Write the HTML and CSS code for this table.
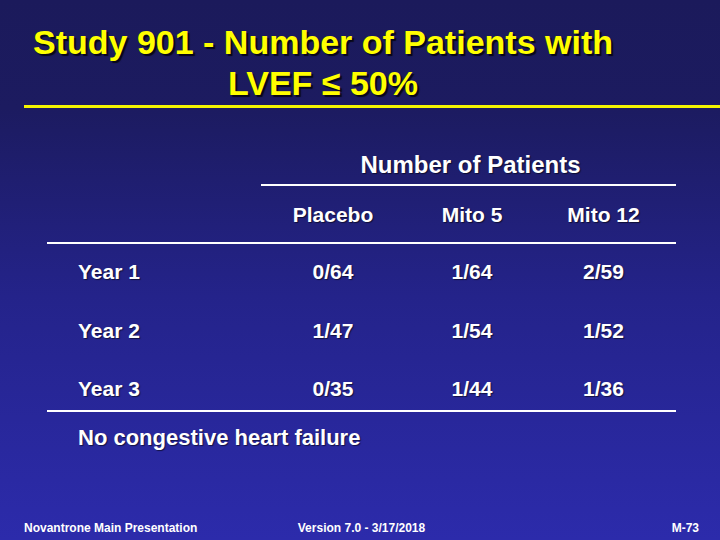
FILE: index.html
```html
<!DOCTYPE html>
<html>
<head>
<meta charset="utf-8">
<link rel="stylesheet" href="styles.css">
</head>
<body>
<div class="slide">
  <div class="title">
    <div class="title-line">Study 901 - Number of Patients with</div>
    <div class="title-line">LVEF ≤ 50%</div>
  </div>
  <div class="title-rule"></div>

  <div class="table">
    <div class="group-head">Number of Patients</div>

    <div class="colhead"></div>
    <div class="colhead num">Placebo</div>
    <div class="colhead num">Mito 5</div>
    <div class="colhead num c4">Mito 12</div>

    <div class="cell label">Year 1</div>
    <div class="cell num">0/64</div>
    <div class="cell num">1/64</div>
    <div class="cell num c4">2/59</div>

    <div class="cell label">Year 2</div>
    <div class="cell num">1/47</div>
    <div class="cell num">1/54</div>
    <div class="cell num c4">1/52</div>

    <div class="cell label last">Year 3</div>
    <div class="cell num last">0/35</div>
    <div class="cell num last">1/44</div>
    <div class="cell num last c4">1/36</div>
  </div>

  <div class="note">No congestive heart failure</div>

  <div class="footer">
    <div class="foot-left">Novantrone Main Presentation</div>
    <div class="foot-mid">Version 7.0 - 3/17/2018</div>
    <div class="foot-right">M-73</div>
  </div>
</div>
</body>
</html>
```

FILE: styles.css
```css
html, body {
  margin: 0;
  padding: 0;
}

body {
  width: 720px;
  height: 540px;
  overflow: hidden;
  font-family: "Liberation Sans", Arial, sans-serif;
}

.slide {
  width: 720px;
  height: 540px;
  display: flex;
  flex-direction: column;
  background: linear-gradient(to bottom, #1b1a5b 0%, #1c1b60 20%, #24238a 55%, #2c2bab 100%);
  color: #ffffff;
}

.title {
  width: 646px;
  padding-top: 22px;
  text-align: center;
  font-size: 34px;
  line-height: 41px;
  font-weight: bold;
  color: #ffff00;
  text-shadow: 2px 2px 1px rgba(0, 0, 0, 0.75);
}

.title-rule {
  margin: 1px 0 0 24px;
  height: 3px;
  background: #f4f400;
}

.table {
  margin: 43px 0 0 47px;
  width: 629px;
  display: grid;
  grid-template-columns: 214px 144px 134px 137px;
  font-weight: bold;
  text-shadow: 1px 1px 1px rgba(0, 0, 0, 0.55);
}

.group-head {
  grid-column: 2 / 5;
  text-align: center;
  font-size: 24px;
  line-height: 28px;
  padding: 0 0 5px 4px;
  border-bottom: 2px solid #ffffff;
}

.colhead {
  font-size: 21px;
  line-height: 24px;
  padding: 17px 0 15px;
  border-bottom: 2px solid #ffffff;
}

.cell {
  font-size: 21px;
  line-height: 24px;
  padding: 16px 0 18.5px;
}

.cell.last {
  padding-bottom: 9px;
  border-bottom: 2px solid #ffffff;
}

.num {
  text-align: center;
}

.c4 {
  padding-right: 8px;
}

.label {
  padding-left: 31px;
}

.note {
  margin: 13px 0 0 78px;
  font-size: 22px;
  line-height: 26px;
  font-weight: bold;
  text-shadow: 1px 1px 1px rgba(0, 0, 0, 0.55);
}

.footer {
  margin-top: auto;
  padding: 0 21px 5px 24px;
  display: grid;
  grid-template-columns: 1fr auto 1fr;
  font-size: 12px;
  line-height: 13px;
  font-weight: bold;
}

.foot-right {
  text-align: right;
}
```
